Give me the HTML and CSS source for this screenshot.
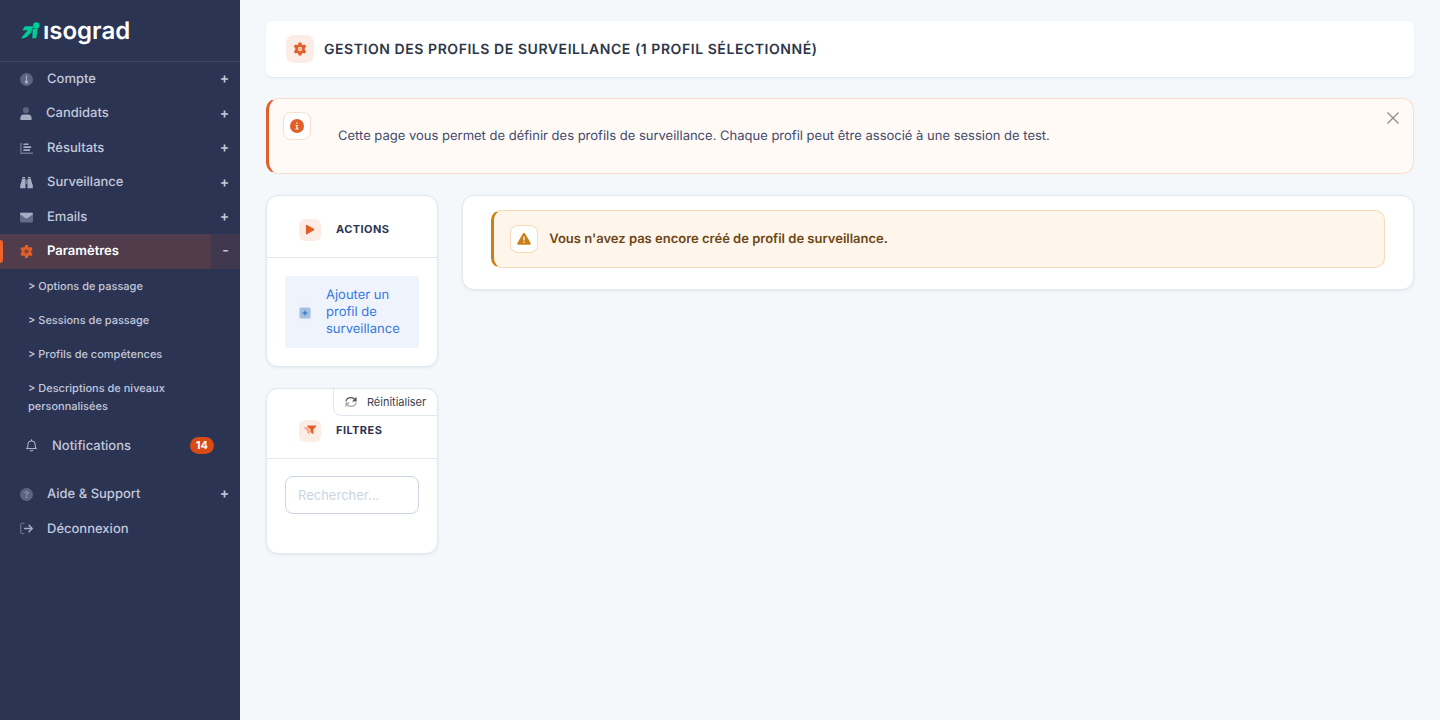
FILE: index.html
```html
<!DOCTYPE html>
<html lang="fr">
<head>
<meta charset="utf-8">
<meta name="viewport" content="width=device-width, initial-scale=1">
<title>Gestion des profils de surveillance</title>
<link rel="stylesheet" href="styles.css">
</head>
<body>
<div class="app">
  <aside class="sidebar">
    <a class="brand" href="#">
      <svg class="brand-mark" viewBox="0 0 57 50" aria-hidden="true"><g fill="#00cc99"><circle cx="46" cy="10" r="9.500"/><path d="M12 12H38L32 30 21 41Q16 48 8 48H0L20 24H4Z"/><path d="M35 20H50L46 48H34Z"/></g><path d="M35 18L29 38" stroke="#2c3454" stroke-width="1.500"/></svg>
      <span class="brand-name">ısograd</span>
    </a>
    <nav class="nav" aria-label="Menu principal">
      <ul class="nav-list">
        <li><a class="nav-link" href="#"><svg class="nav-icon" viewBox="0 0 14 14" aria-hidden="true"><circle cx="7" cy="7" r="7" opacity=".4"/><circle cx="7" cy="9.700" r="1.800"/><path d="M6.400 2.500h1.200v7H6.400z"/></svg><span class="nav-text">Compte</span><span class="nav-toggle">+</span></a></li>
        <li><a class="nav-link" href="#"><svg class="nav-icon narrow" viewBox="0 0 12 14" aria-hidden="true"><circle cx="6" cy="3.500" r="3.300" opacity=".4"/><path d="M0 14v-2Q0 8.400 4 8.200h4q4 .2 4 3.800v2z"/></svg><span class="nav-text">Candidats</span><span class="nav-toggle">+</span></a></li>
        <li><a class="nav-link" href="#"><svg class="nav-icon" viewBox="0 0 14 14" aria-hidden="true"><path d="M.2 1.200h1.600V11.200H14v1.600H.2z" opacity=".5"/><path d="M3.700 1.500h5.500v1.700H3.700zM3.700 4.700H12v1.700H3.700zM3.700 7.900h7v1.700h-7z"/></svg><span class="nav-text">Résultats</span><span class="nav-toggle">+</span></a></li>
        <li><a class="nav-link" href="#"><svg class="nav-icon" viewBox="0 0 14 14" aria-hidden="true"><path d="M2.500 1h3v1.300h-3zM8.500 1h3v1.300h-3zM2.200 3H5.900V13.200H.2V10Q1.900 6 2.200 3zM8.100 3h3.700Q12.100 6 13.800 10v3.200H8.100z"/><path d="M6 4.500h2v4H6z" opacity=".6"/></svg><span class="nav-text">Surveillance</span><span class="nav-toggle">+</span></a></li>
        <li><a class="nav-link" href="#"><svg class="nav-icon" viewBox="0 0 14 14" aria-hidden="true"><rect y="1.800" width="14" height="10.500" rx="1.200" opacity=".45"/><path d="M1.200 1.800h11.600q1.200 0 1.200 1.200v.5L8 7.800q-1 .7-2 0L0 3.500V3q0-1.200 1.200-1.200z"/></svg><span class="nav-text">Emails</span><span class="nav-toggle">+</span></a></li>
        <li>
          <a class="nav-link active" href="#" aria-current="page"><svg class="nav-icon" viewBox="0 0 14 14" aria-hidden="true"><path fill-rule="evenodd" d="M5.500 0h3l.4 2.100 1.200.7 2-.7 1.500 2.600-1.600 1.400v1.800l1.600 1.400-1.500 2.600-2-.7-1.200.7-.4 2.100h-3l-.4-2.100-1.200-.7-2 .7L.4 9.300 2 7.900V6.100L.4 4.700l1.500-2.600 2 .7 1.200-.7zM7 4.800a2.200 2.200 0 100 4.400 2.200 2.200 0 000-4.400z"/><circle cx="7" cy="7" r="1.700" opacity=".4"/></svg><span class="nav-text">Paramètres</span><span class="nav-toggle">-</span></a>
          <ul class="subnav">
            <li><a href="#">&gt; Options de passage</a></li>
            <li><a href="#">&gt; Sessions de passage</a></li>
            <li><a href="#">&gt; Profils de compétences</a></li>
            <li><a href="#">&gt; Descriptions de niveaux personnalisées</a></li>
          </ul>
        </li>
        <li><a class="nav-link notifications" href="#"><svg class="nav-icon outline" viewBox="0 0 14 14" aria-hidden="true"><path d="M7 .8v1M1.800 10.300h10.400L11 8.600V6a4 4 0 00-8 0v2.600zM5.600 12.500q1.400 1.200 2.800 0"/></svg><span class="nav-text">Notifications</span><span class="badge">14</span></a></li>
        <li><a class="nav-link" href="#"><svg class="nav-icon" viewBox="0 0 14 14" aria-hidden="true"><circle cx="7" cy="7" r="7" opacity=".4"/><path class="stroke" d="M5.300 5.300Q5.500 4 7 4t1.700 1.400Q8.700 6.400 7 7.100V8"/><circle cx="7" cy="9.900" r=".8"/></svg><span class="nav-text">Aide &amp; Support</span><span class="nav-toggle">+</span></a></li>
        <li><a class="nav-link" href="#"><svg class="nav-icon outline bold" viewBox="0 0 14 14" aria-hidden="true"><path d="M4.200 1.500H2q-1.200 0-1.200 1.200v8.600q0 1.200 1.200 1.200h2.200" opacity=".45"/><path d="M5 7h8M9.700 3.600L13.200 7 9.700 10.400"/></svg><span class="nav-text">Déconnexion</span></a></li>
      </ul>
    </nav>
  </aside>

  <main class="main">
    <header class="page-header">
      <span class="tile large"><svg viewBox="0 0 14 14" aria-hidden="true"><path fill-rule="evenodd" d="M5.600.5h2.800l.4 1.900 1.100.6 1.900-.6 1.400 2.400-1.400 1.300v1.800l1.400 1.300-1.400 2.400-1.900-.6-1.100.6-.4 1.900H5.600l-.4-1.900-1.100-.6-1.900.6L.8 9.200l1.400-1.300V6.100L.8 4.800l1.400-2.400 1.900.6 1.100-.6zM7 4.800a2.200 2.200 0 100 4.400 2.200 2.200 0 000-4.400z"/><circle cx="7" cy="7" r="1.800" opacity=".4"/></svg></span>
      <h1 class="page-title">Gestion des profils de surveillance (1 profil sélectionné)</h1>
    </header>

    <section class="alert info">
      <span class="tile large framed"><svg viewBox="0 0 14 14" aria-hidden="true"><circle cx="7" cy="7" r="7"/><path fill="#fff" d="M6.300 3.500h1.300v1.300H6.300zM5.600 6h2v3.400h.9v1H5.400v-1h1V7h-.8z"/></svg></span>
      <p class="alert-text">Cette page vous permet de définir des profils de surveillance. Chaque profil peut être associé à une session de test.</p>
      <button class="close" type="button" aria-label="Fermer"><svg viewBox="0 0 12 12" aria-hidden="true"><path d="M.5.5l11 11M11.500.5l-11 11"/></svg></button>
    </section>

    <div class="columns">
      <div class="side">
        <section class="card">
          <header class="card-header">
            <span class="tile"><svg viewBox="0 0 14 14" aria-hidden="true"><path d="M2.200 2q0-1.500 1.400-.9l8 4.500q1.100.9 0 1.800l-8 4.500q-1.400.6-1.400-.9z"/></svg></span>
            <h2 class="card-title">Actions</h2>
          </header>
          <div class="card-body">
            <a class="action" href="#">
              <span class="action-icon"><svg viewBox="0 0 12 12" aria-hidden="true"><rect x=".5" y=".5" width="11" height="11" rx="1.500" fill="#a3bfe2"/><path d="M6 3.500v5M3.500 6h5" stroke="#2667bd"/></svg></span>
              <span>Ajouter un profil de surveillance</span>
            </a>
          </div>
        </section>
        <section class="card">
          <button class="reset" type="button"><svg viewBox="0 0 14 14" aria-hidden="true"><path d="M1 6.300Q2 1.900 7 1.900q2.800 0 5 2.500"/><path d="M13.500.8v5.500H8.200z" class="fill"/><g opacity=".5"><path d="M13 7.700Q12 12.100 7 12.100q-2.800 0-5-2.500"/><path d="M.5 13.200V7.700h5.300z" class="fill"/></g></svg>Réinitialiser</button>
          <header class="card-header filters">
            <span class="tile"><svg class="funnel" viewBox="0 0 14 14" aria-hidden="true"><path d="M0 2.500H3.600L6.500 5.500V11.500L3.700 9V7L0 3.500z" opacity=".45"/><path d="M4 .5h10v1.500L11 5v5.800L7.500 8.500V5L4 2z"/></svg></span>
            <h2 class="card-title">Filtres</h2>
          </header>
          <div class="card-body filters">
            <input class="search" type="text" placeholder="Rechercher..." aria-label="Rechercher">
          </div>
        </section>
      </div>

      <section class="card results">
        <div class="alert warning">
          <span class="tile large framed"><svg viewBox="0 0 14 14" aria-hidden="true"><path d="M6.100 1.300q.9-1.300 1.800 0l5.700 9.700q.6 1.500-.9 1.700H1.300Q-.2 12.500.4 11z"/><path fill="#fff" d="M6.400 4.500h1.200v4H6.400zM6.400 9.500h1.200v1.300H6.400z"/></svg></span>
          <p class="alert-text">Vous n'avez pas encore créé de profil de surveillance.</p>
        </div>
      </section>
    </div>
  </main>
</div>
</body>
</html>
```
FILE: styles.css
```css
* { box-sizing: border-box; }

body {
  margin: 0;
  background: #f4f8fb;
  color: #2c3454;
  font-family: Inter, "Liberation Sans", sans-serif;
  font-size: 13px;
  line-height: 1.42;
  text-rendering: geometricPrecision;
}

h1, h2, p, ul { margin: 0; padding: 0; }
ul { list-style: none; }
a { text-decoration: none; }
svg { display: block; flex: none; }

.app {
  display: grid;
  grid-template-columns: 240px minmax(0, 1fr);
  min-height: 100vh;
}

/* Sidebar */
.sidebar { background: #2c3454; color: #c2c8da; }

.brand {
  display: flex;
  align-items: center;
  gap: 3px;
  height: 62px;
  padding: 0 21px;
  border-bottom: 1px solid #3e4766;
  color: #fff;
}
.brand-mark { width: 19px; height: 17px; }
.brand-name { font-size: 24px; font-weight: 600; line-height: 30px; }

.nav-link {
  position: relative;
  display: flex;
  align-items: center;
  padding: 8px 0 8px 20px;
  color: #c2c8da;
  font-weight: 500;
}
.nav-icon { width: 13px; height: 13px; margin-right: 14px; fill: #a6adc3; }
.nav-icon.narrow { width: 12px; }
.nav-icon .stroke { fill: none; stroke: #a6adc3; }
.nav-icon.outline { fill: none; stroke: #c2c8da; stroke-linecap: round; stroke-linejoin: round; }
.nav-icon.bold { stroke: #a6adc3; stroke-width: 1.5; }
.nav-text { flex: 1; }
.nav-toggle { width: 29px; padding-right: 2px; font-size: 14px; line-height: 18px; text-align: center; font-weight: 600; }

.nav-link.active {
  background: linear-gradient(to left, #40384f 29px, #503c4b 29px);
  color: #fff;
  font-weight: 600;
}
.nav-link.active .nav-icon { fill: #e35f29; }
.nav-link.active .nav-toggle { padding-right: 0; color: #c2c8da; }
.nav-link.active::before {
  content: "";
  position: absolute;
  top: 6px;
  bottom: 6px;
  left: 0;
  width: 3px;
  border-radius: 0 3px 3px 0;
  background: #ee632a;
}

.subnav a {
  display: block;
  padding: 8px 40px 8px 28px;
  color: #c2c8da;
  font-size: 11px;
  font-weight: 500;
  line-height: 18px;
}

.nav-link.notifications { margin: 6px 26px 14px 5px; }
.badge {
  padding: 0 6px;
  border-radius: 9px;
  background: #d84a16;
  color: #fff;
  font-size: 11px;
  font-weight: 700;
  line-height: 17px;
}

/* Page */
.main {
  display: flex;
  flex-direction: column;
  gap: 21px;
  padding: 21px 26px;
}

.page-header {
  display: flex;
  align-items: center;
  gap: 10px;
  padding: 14px 20px;
  border-radius: 6px;
  background: #fff;
  box-shadow: 0 1px 2px #2c34541a;
}
.page-title {
  color: #2d3748;
  font-size: 14px;
  font-weight: 600;
  line-height: 21px;
  letter-spacing: 0.04em;
  text-transform: uppercase;
}

.tile {
  display: grid;
  flex: none;
  place-items: center;
  width: 22px;
  height: 22px;
  border-radius: 6px;
  background: #fcece6;
}
.tile svg { width: 12px; height: 12px; fill: #e35f29; }
.tile.large { width: 28px; height: 28px; border-radius: 8px; }
.tile.large svg { width: 14px; height: 14px; }
.tile.framed { border: 1px solid #f6dfcf; background: #fff; }

.alert { display: flex; border: 1px solid; border-left-width: 3px; }
.alert.info {
  gap: 27px;
  padding: 13px 14px 28px;
  border-color: #f6dfcf;
  border-left-color: #e35f29;
  border-radius: 12px;
  background: #fffaf6;
}
.alert.info .alert-text { flex: 1; margin-top: 15px; color: #424a6c; }

.close {
  align-self: flex-start;
  padding: 0;
  border: 0;
  background: none;
  cursor: pointer;
}
.close svg { width: 12px; height: 12px; stroke: #8d8985; stroke-width: 1.2; }

.columns {
  display: grid;
  grid-template-columns: 15% minmax(0, 1fr);
  gap: 24px;
  align-items: start;
}
.side { display: grid; gap: 21px; }

.card {
  position: relative;
  border: 1px solid #e2e8f0;
  border-radius: 12px;
  background: #fff;
  box-shadow: 0 1px 3px #2c345414;
}
.card-header {
  display: flex;
  align-items: center;
  gap: 15px;
  padding: 23px 32px 16px;
  border-bottom: 1px solid #e2e8f0;
}
.card-header.filters { padding: 31px 32px 16px; }
.card-title {
  padding-bottom: 2px;
  font-size: 11px;
  font-weight: 700;
  line-height: 18px;
  letter-spacing: 0.04em;
  text-transform: uppercase;
}
.card-body { padding: 18px; }
.card-body.filters { padding: 17px 18px 39px; }

.action {
  display: flex;
  align-items: center;
  gap: 14px;
  padding: 11px 12px 10px 13px;
  background: #eff4fc;
  color: #3578e0;
  line-height: 17px;
}
.action-icon { padding: 8px 1px; border-radius: 6px; background: #edf2fb; }
.action-icon svg { width: 12px; height: 12px; }

.reset {
  position: absolute;
  top: -1px;
  right: -1px;
  display: flex;
  align-items: center;
  gap: 10px;
  padding: 4px 11px;
  border: 1px solid #e2e8f0;
  border-radius: 0 12px 0 8px;
  background: #fff;
  color: #374151;
  font: inherit;
  font-size: 11px;
  line-height: 18px;
  cursor: pointer;
}
.reset svg { width: 12px; height: 12px; fill: none; stroke: #4b5563; stroke-width: 1.5; }
.reset .fill { fill: #4b5563; stroke: none; }

.search {
  display: block;
  width: 100%;
  height: 38px;
  padding: 0 12px;
  border: 1px solid #cbd5e1;
  border-radius: 8px;
  background: #fff;
  color: #2c3454;
  font: inherit;
}
.search::placeholder { color: #cbd5e1; opacity: 1; }

.results { padding: 14px 28px 21px; }
.alert.warning {
  gap: 11px;
  padding: 14px 16px;
  border-color: #f5dcb4;
  border-left-color: #cb8017;
  border-radius: 10px;
  background: #fff6eb;
  color: #6d4618;
  font-weight: 600;
}
.warning .tile { border-color: #f5dcb4; }
.warning .tile svg { fill: #cb8017; }
.warning .alert-text { margin-top: 5px; }
```
